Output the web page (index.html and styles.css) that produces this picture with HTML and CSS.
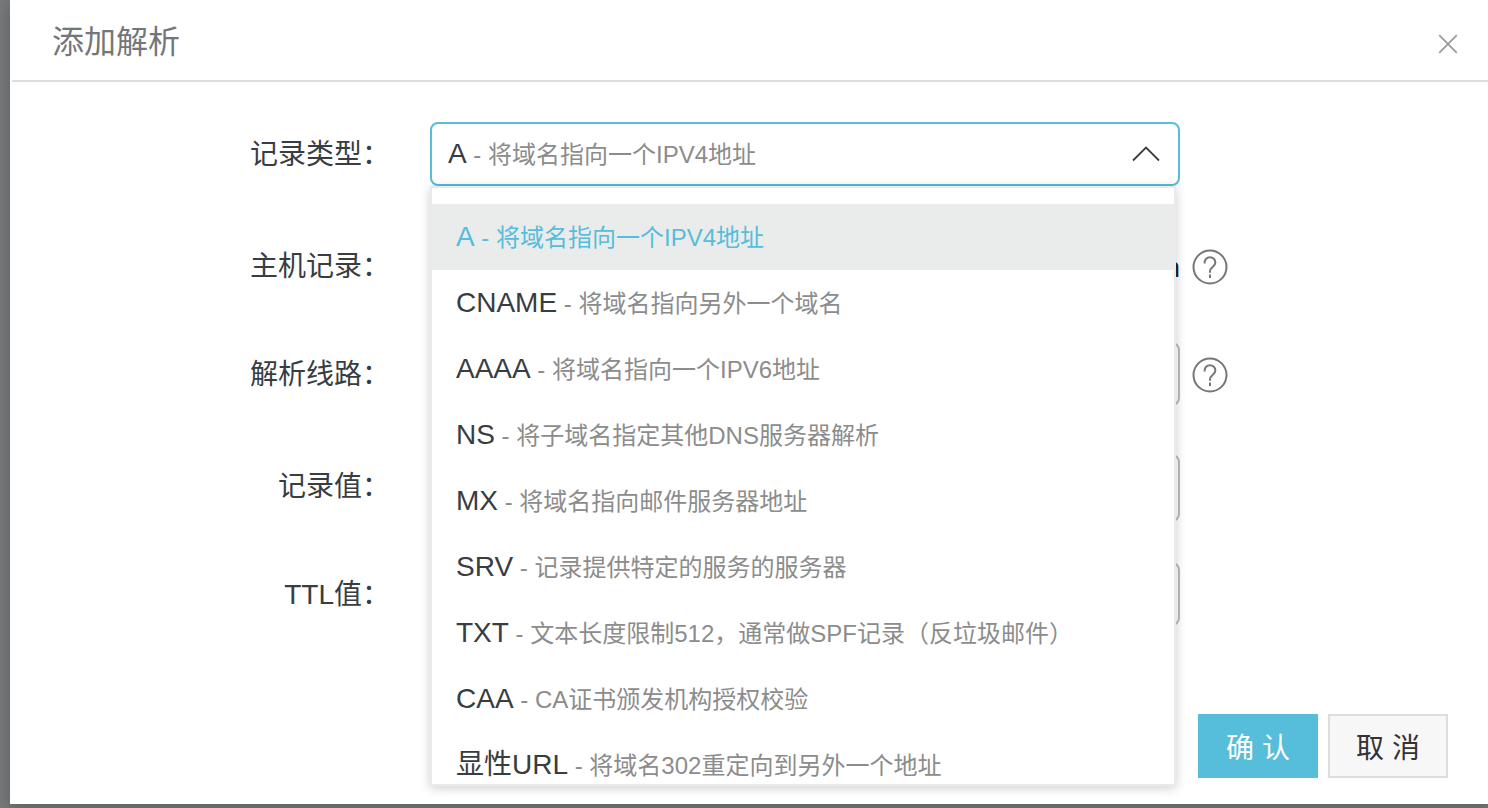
FILE: index.html
```html
<!DOCTYPE html>
<html lang="zh-CN">
<head>
<meta charset="utf-8">
<title>添加解析</title>
<link rel="stylesheet" href="styles.css">
</head>
<body>
<main class="modal" role="dialog" aria-labelledby="modal-title">
  <header class="modal-header">
    <h1 class="modal-title" id="modal-title">添加解析</h1>
    <button class="close" type="button" aria-label="关闭">
      <svg width="20" height="20" viewBox="0 0 20 20" fill="none" stroke="currentColor" stroke-width="1.8"><path d="M1.2 1.2 18.8 18.8M18.8 1.2 1.2 18.8"/></svg>
    </button>
  </header>
  <form class="form">
    <div class="row">
      <label class="label" for="type">记录类型：</label>
      <div class="control">
        <button class="select-trigger" id="type" type="button" role="combobox" aria-expanded="true" aria-controls="type-list">
          <span class="trigger-text"><span class="name">A</span><span class="desc"> - 将域名指向一个IPV4地址</span></span>
          <svg width="28" height="16" viewBox="0 0 28 16" fill="none" stroke="currentColor" stroke-width="1.8"><path d="M1 14.5 14 1.5 27 14.5"/></svg>
        </button>
        <ul class="menu" id="type-list" role="listbox" aria-label="记录类型">
          <li class="option option-active" role="option" aria-selected="true"><span class="name">A</span><span class="desc"> - 将域名指向一个IPV4地址</span></li>
          <li class="option" role="option"><span class="name">CNAME</span><span class="desc"> - 将域名指向另外一个域名</span></li>
          <li class="option" role="option"><span class="name">AAAA</span><span class="desc"> - 将域名指向一个IPV6地址</span></li>
          <li class="option" role="option"><span class="name">NS</span><span class="desc"> - 将子域名指定其他DNS服务器解析</span></li>
          <li class="option" role="option"><span class="name">MX</span><span class="desc"> - 将域名指向邮件服务器地址</span></li>
          <li class="option" role="option"><span class="name">SRV</span><span class="desc"> - 记录提供特定的服务的服务器</span></li>
          <li class="option" role="option"><span class="name">TXT</span><span class="desc"> - 文本长度限制512，通常做SPF记录（反垃圾邮件）</span></li>
          <li class="option" role="option"><span class="name">CAA</span><span class="desc"> - CA证书颁发机构授权校验</span></li>
          <li class="option" role="option"><span class="name">显性URL</span><span class="desc"> - 将域名302重定向到另外一个地址</span></li>
        </ul>
      </div>
    </div>
    <div class="row row-text">
      <label class="label" for="host">主机记录：</label>
      <div class="control host">
        <input class="field" id="host" type="text">
        <span class="suffix">.cn</span>
      </div>
      <button class="help" type="button" aria-label="主机记录说明">
        <svg width="36" height="36" viewBox="0 0 36 36" fill="none" stroke="currentColor" stroke-width="2"><circle cx="18" cy="18" r="16.5"/><path d="M12.6 14.4V13.6A5.4 5.4 0 0 1 23.4 13.6C23.4 17.6 18 17.8 18 22.4V23.8M18 25.4V29"/></svg>
      </button>
    </div>
    <div class="row">
      <label class="label" for="line">解析线路：</label>
      <div class="control"><select class="field" id="line"></select></div>
      <button class="help" type="button" aria-label="解析线路说明">
        <svg width="36" height="36" viewBox="0 0 36 36" fill="none" stroke="currentColor" stroke-width="2"><circle cx="18" cy="18" r="16.5"/><path d="M12.6 14.4V13.6A5.4 5.4 0 0 1 23.4 13.6C23.4 17.6 18 17.8 18 22.4V23.8M18 25.4V29"/></svg>
      </button>
    </div>
    <div class="row row-text">
      <label class="label" for="value">记录值：</label>
      <div class="control"><input class="field" id="value" type="text"></div>
    </div>
    <div class="row">
      <label class="label" for="ttl">TTL值：</label>
      <div class="control"><select class="field" id="ttl"></select></div>
    </div>
  </form>
  <footer class="modal-footer">
    <button class="button button-primary" type="button">确 认</button>
    <button class="button" type="button">取 消</button>
  </footer>
</main>
</body>
</html>
```
FILE: styles.css
```css
* {
  box-sizing: border-box;
}

body {
  margin: 0;
  padding: 0 0 4px 10px;
  background: #767779;
  color: #373d41;
  font-family: "Liberation Sans", "Noto Sans CJK SC", sans-serif;
  font-size: 28px;
}

button,
input,
select {
  font: inherit;
  color: inherit;
}

.modal {
  display: flex;
  flex-direction: column;
  min-height: calc(100vh - 4px);
  background: #fff;
  box-shadow: 0 4px 12px rgba(0, 0, 0, 0.2);
}

.modal-header {
  display: flex;
  align-items: center;
  justify-content: space-between;
  height: 82px;
  margin-left: 2px;
  padding: 4px 30px 0 40px;
  border-bottom: 2px solid #ddd;
}

.modal-title {
  margin: 0;
  color: #73777a;
  font-size: 32px;
  font-weight: 400;
  line-height: 40px;
}

.close,
.help {
  display: flex;
  padding: 0;
  border: 0;
  background: none;
}

.close {
  margin-top: 4px;
  color: #999c9f;
}

.form {
  display: flex;
  flex-direction: column;
  gap: 40px;
  padding: 40px 260px 0 0;
}

.row {
  display: grid;
  grid-template-columns: 380px minmax(0, 1fr) 36px;
  align-items: start;
}

.row-text {
  padding-top: 8px;
}

.label {
  height: 64px;
  line-height: 66px;
  text-align: right;
}

.control {
  position: relative;
  margin: 0 12px 0 40px;
}

.select-trigger {
  display: flex;
  align-items: center;
  justify-content: space-between;
  width: 100%;
  height: 64px;
  padding: 0 18px 0 16px;
  border: 2px solid #56bddb;
  border-radius: 8px;
  background: #fff;
  text-align: left;
}

.trigger-text {
  line-height: 40px;
}

.desc {
  color: #8c8c8c;
  font-size: 24px;
  white-space: pre;
}

.menu {
  position: absolute;
  z-index: 1;
  top: 64px;
  left: 0;
  right: 4px;
  height: 600px;
  margin: 0;
  padding: 16px 0 0;
  overflow: hidden;
  border: 2px solid #e9ebeb;
  background: #fff;
  box-shadow: 0 2px 10px rgba(0, 0, 0, 0.2);
  list-style: none;
}

.option {
  height: 66px;
  padding: 0 24px;
  line-height: 66px;
  white-space: nowrap;
}

.option-active {
  background: #eaeceb;
}

.option-active,
.option-active .desc {
  color: #56bddb;
}

.field {
  display: block;
  width: 100%;
  height: 64px;
  padding: 0 16px;
  border: 2px solid #bbb;
  border-radius: 8px;
  background: #fff;
  appearance: none;
}

.row-text .field {
  height: 68px;
}

.host {
  display: flex;
  gap: 12px;
}

.host .field {
  flex: 1;
  width: auto;
  min-width: 0;
}

.suffix {
  color: #222;
  line-height: 68px;
}

.help {
  margin-top: 15px;
  color: #73777a;
}

.modal-footer {
  display: flex;
  justify-content: flex-end;
  gap: 10px;
  margin-top: auto;
  padding: 26px 40px;
}

.button {
  width: 120px;
  height: 64px;
  padding: 0;
  border: 2px solid #ddd;
  background: #f7f7f7;
  color: #333;
}

.button-primary {
  border-color: #56bddb;
  background: #56bddb;
  color: #fff;
}
```
